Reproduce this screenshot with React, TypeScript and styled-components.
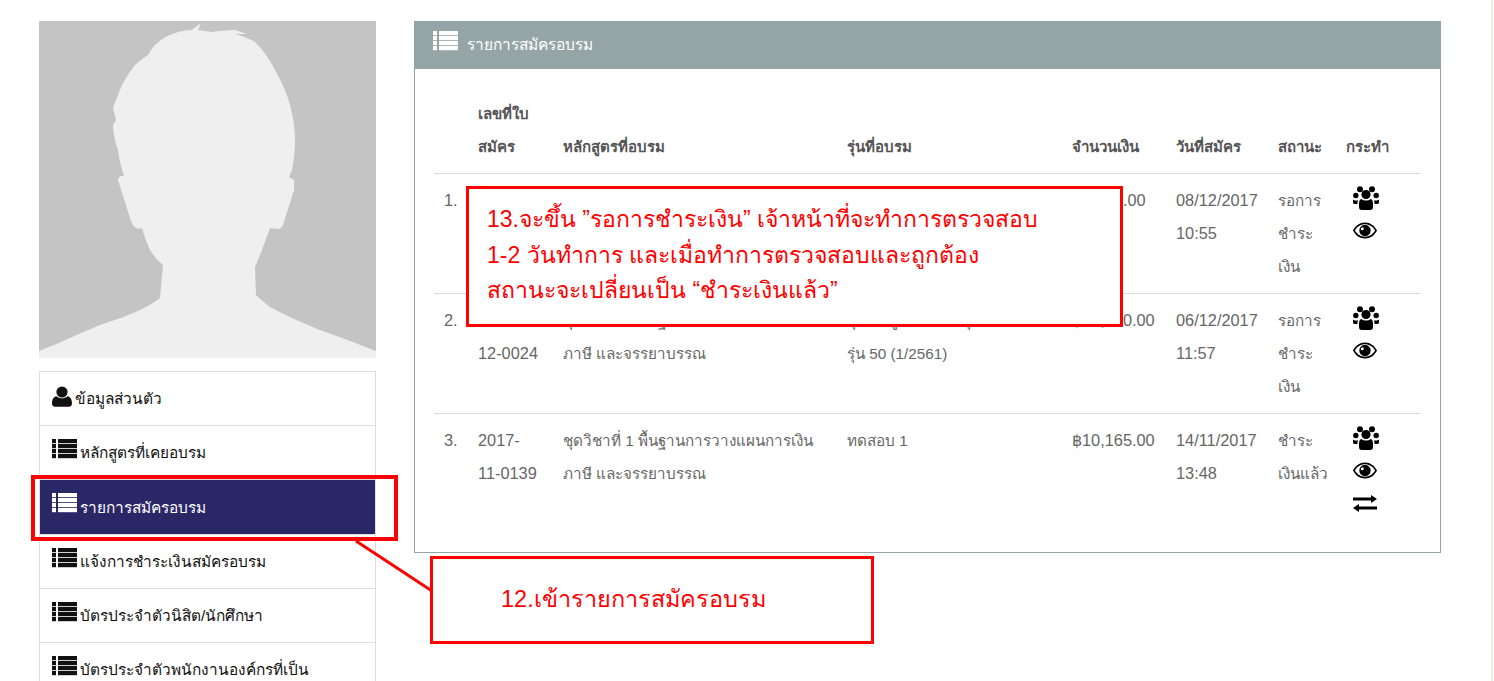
import React from "react";
import styled, { createGlobalStyle } from "styled-components";

const Global = createGlobalStyle`
  html, body { margin: 0; padding: 0; background: #fff; }
  body { font-family: "Liberation Sans", "Noto Sans", sans-serif; overflow: hidden; }
`;

const Page = styled.div`
  position: relative;
  width: 1493px;
  height: 681px;
  overflow: hidden;
  box-sizing: border-box;
  padding: 21px 0 0 39px;
  display: flex;
  gap: 38px;
  border-right: 2px solid #ecece4;
`;
const Side = styled.aside`
  flex: 0 0 337px;
  display: flex;
  flex-direction: column;
  gap: 13px;
`;
const Avatar = styled.svg`
  display: block;
  flex: none;
  width: 337px;
  height: 337px;
`;
const Menu = styled.ul`
  flex: none;
  list-style: none;
  margin: 0;
  padding: 0;
  border: 1px solid #ddd;
  border-bottom: 0;
`;
const MenuItem = styled.li<{ $active?: boolean }>`
  height: ${(p) => (p.$active ? 55 : 54)}px;
  box-sizing: border-box;
  padding: 10px 12px;
  border-bottom: 1px solid #ddd;
  font-size: 15.4px;
  line-height: 33px;
  white-space: nowrap;
  color: ${(p) => (p.$active ? "#fff" : "#111")};
  background: ${(p) => (p.$active ? "#2a2766" : "#fff")};
  display: flex;
  align-items: center;
  gap: 3px;
`;
const Panel = styled.section`
  flex: 0 0 1027px;
  height: 532px;
  box-sizing: border-box;
  border: 1px solid #95a5a6;
  border-top: 0;
`;
const PanelHead = styled.header`
  height: 48px;
  margin: 0 -1px;
  padding: 0 19px;
  background: #95a5a6;
  color: #fff;
  display: flex;
  align-items: center;
  gap: 9px;
  font-size: 15.5px;
  line-height: 46px;
`;
const PanelBody = styled.div`
  padding: 18px 19px 0;
`;
const Table = styled.table`
  width: 987px;
  table-layout: fixed;
  border-collapse: collapse;
  font-size: 15.25px;
  line-height: 33px;
  color: #666;
`;
const Th = styled.th<{ $w: number }>`
  width: ${(p) => p.$w}px;
  box-sizing: border-box;
  padding: 10px;
  text-align: left;
  vertical-align: bottom;
  font-weight: 700;
  font-size: 15px;
  color: #555;
`;
const Row = styled.tr`
  border-top: 1px solid #ddd;
`;
const Td = styled.td<{ $latin?: boolean }>`
  padding: 10px;
  vertical-align: top;
  white-space: nowrap;
  font-size: ${(p) => (p.$latin ? "16.35px" : "inherit")};
`;
const Actions = styled.div`
  display: flex;
  flex-direction: column;
  align-items: flex-start;
  color: #000;
  margin: -3px 0 0 7px;
`;
const ActionIcon = styled.span`
  height: 33px;
  display: flex;
  align-items: center;
`;
const Outline = styled.div`
  position: absolute;
  box-sizing: border-box;
  border: 3px solid #f00;
  color: #f00;
`;
const NoteBig = styled(Outline)`
  left: 466px;
  top: 186px;
  width: 657px;
  height: 141px;
  background: #fff;
  padding: 13px 18px;
  font-size: 23px;
  line-height: 35.5px;
  white-space: nowrap;
`;
const NoteSmall = styled(Outline)`
  left: 430px;
  top: 556px;
  width: 444px;
  height: 88px;
  background: #fff;
  padding: 0 68px;
  font-size: 23.5px;
  line-height: 80px;
  white-space: nowrap;
`;
const Highlight = styled(Outline)`
  left: 31px;
  top: 475px;
  width: 367px;
  height: 66px;
  border-width: 4px;
`;
const Connector = styled.svg`
  position: absolute;
  left: 350px;
  top: 535px;
  width: 90px;
  height: 65px;
`;
const IconSvg = styled.svg<{ $lift: number }>`
  flex: none;
  margin-top: ${(p) => -p.$lift}px;
`;

const ListIcon = () => (
  <IconSvg $lift={8} width="25" height="20" viewBox="0 0 25 20" fill="currentColor">
    {[0, 5, 10, 15].map((y) => (
      <g key={y}>
        <rect x="0" y={y} width="4" height="4.200" />
        <rect x="6" y={y} width="19" height="4.200" />
      </g>
    ))}
  </IconSvg>
);
const UserIcon = () => (
  <IconSvg $lift={4} width="20" height="21" viewBox="0 0 20 21" fill="currentColor">
    <circle cx="10" cy="6" r="5.600" />
    <path d="M0 17.500C0 13.500 1.500 10.500 4.600 10.200 6 11.600 8 12.200 10 12.200s4-.6 5.400-2c3.100.3 4.600 3.300 4.600 7.300 0 2-1.400 3.300-3.200 3.300H3.200C1.400 20.800 0 19.500 0 17.500z" />
  </IconSvg>
);
const UsersIcon = () => (
  <svg width="26" height="24" viewBox="0 0 26 24" fill="currentColor">
    <circle cx="7" cy="3.200" r="3" />
    <circle cx="19" cy="3.200" r="3" />
    <circle cx="13" cy="8.500" r="4.600" />
    <circle cx="2.800" cy="9.500" r="2.700" />
    <circle cx="23.200" cy="9.500" r="2.700" />
    <path d="M0 13.500c1 1 3 1.200 5 .7-.5 1.300-.6 2.500-.6 3.800H1.500C.5 18 0 17.300 0 16z" />
    <path d="M26 13.500c-1 1-3 1.200-5 .7.500 1.300.6 2.500.6 3.800h2.900c1 0 1.500-.7 1.500-2z" />
    <path d="M6 17.500c0-2.500.8-4.200 2.400-4.600 1.200 1 3 1.500 4.600 1.500s3.400-.5 4.600-1.500c1.600.4 2.400 2.100 2.400 4.600V21c0 1.800-1 3-2.500 3h-9C7 24 6 22.800 6 21z" />
  </svg>
);
const EyeIcon = () => (
  <svg width="24" height="17" viewBox="0 0 24 17" fill="currentColor" fillRule="evenodd">
    <path d="M12 .5C6.800.5 2.500 3.500 0 8.500c2.500 5 6.800 8 12 8s9.500-3 12-8c-2.500-5-6.800-8-12-8zM12 2.300c-4.300 0-7.900 2.300-10 6.200 2.100 3.900 5.700 6.200 10 6.200s7.900-2.300 10-6.200c-2.100-3.900-5.700-6.200-10-6.200z" />
    <path d="M12 2.800a5.700 5.700 0 1 0 0 11.400 5.700 5.700 0 0 0 0-11.400zM9.300 5.300a1.500 1.500 0 1 1 0 3 1.500 1.500 0 0 1 0-3z" />
  </svg>
);
const TransferIcon = () => (
  <svg width="24" height="17" viewBox="0 0 24 17" fill="currentColor">
    <path d="M0 2.500h18V0l6 4-6 4V5.500H0z" />
    <path d="M24 11.500H6V9l-6 4 6 4v-2.500h18z" />
  </svg>
);

const columns: [string[], number][] = [
  [[], 34],
  [["เลขที่ใบ", "สมัคร"], 85],
  [["หลักสูตรที่อบรม"], 284],
  [["รุ่นที่อบรม"], 225],
  [["จำนวนเงิน"], 104],
  [["วันที่สมัคร"], 102],
  [["สถานะ"], 68],
  [["กระทำ"], 85],
];
const course = ["ชุดวิชาที่ 1 พื้นฐานการวางแผนการเงิน", "ภาษี และจรรยาบรรณ"];
const rows = [
  { n: "1.", code: ["2017-", "12-0031"], course, gen: ["จุฬาฯ ศูนย์อบรมกรุงเทพ", "รุ่น 50 (1/2561)"], amt: "฿9,630.00", date: ["08/12/2017", "10:55"], status: ["รอการ", "ชำระ", "เงิน"], transfer: false },
  { n: "2.", code: ["2017-", "12-0024"], course, gen: ["จุฬาฯ ศูนย์อบรมกรุงเทพ", "รุ่น 50 (1/2561)"], amt: "฿10,700.00", date: ["06/12/2017", "11:57"], status: ["รอการ", "ชำระ", "เงิน"], transfer: false },
  { n: "3.", code: ["2017-", "11-0139"], course, gen: ["ทดสอบ 1"], amt: "฿10,165.00", date: ["14/11/2017", "13:48"], status: ["ชำระ", "เงินแล้ว"], transfer: true },
];
const menu = ["หลักสูตรที่เคยอบรม", "รายการสมัครอบรม", "แจ้งการชำระเงินสมัครอบรม", "บัตรประจำตัวนิสิต/นักศึกษา", "บัตรประจำตัวพนักงานองค์กรที่เป็น"];

const Lines = ({ items }: { items: string[] }) => (
  <>
    {items.map((t, i) => (
      <React.Fragment key={t}>
        {i > 0 && <br />}
        {t}
      </React.Fragment>
    ))}
  </>
);

export default function App() {
  return (
    <>
      <Global />
      <Page>
        <Side>
          <Avatar viewBox="39 21 337 337">
            <rect x="39" y="21" width="337" height="337" fill="#c4c4c4" />
            <path
              fill="#efefef"
              d="M39 351C60 343 80 333 100 325 118 319 130 315 140 310 148 306 155 302 160 298L163 265C157 260 153 255 150 250 147 243 144 236 142 228 139 229 137 229 136 228 133 226 131 222 130 218L118 180C118 178 120 176 122 176L124 176C121 167 119 158 118 150 115 142 113 133 113 125L116 120 113 108C116 100 119 92 122 85 127 76 131 70 135 65 139 61 144 58 148 55 150 51 152 48 155 45 161 39 168 35 175 33 181 31 187 30 192 30L201 23 198 30 212 32C220 31 228 30 235 30L247 34 235 34C243 36 250 39 255 42 263 50 270 60 275 70 282 82 287 94 290 105 293 117 295 128 295 140 295 150 294 160 292 170L289 177 294 180 294 190 283 225C282 227 280 229 278 229L270 228 262 250 255 267 256 295C260 299 265 303 270 307 285 315 302 323 320 330 340 337 358 344 376 351L376 358 39 358Z"
            />
          </Avatar>
          <Menu>
            <MenuItem>
              <UserIcon />
              ข้อมูลส่วนตัว
            </MenuItem>
            {menu.map((m, i) => (
              <MenuItem key={m} $active={i === 1}>
                <ListIcon />
                {m}
              </MenuItem>
            ))}
          </Menu>
        </Side>
        <Panel>
          <PanelHead>
            <ListIcon />
            รายการสมัครอบรม
          </PanelHead>
          <PanelBody>
            <Table>
              <thead>
                <tr>
                  {columns.map(([label, w]) => (
                    <Th key={w} $w={w}>
                      <Lines items={label} />
                    </Th>
                  ))}
                </tr>
              </thead>
              <tbody>
                {rows.map((r) => (
                  <Row key={r.n}>
                    <Td $latin>{r.n}</Td>
                    <Td $latin>
                      <Lines items={r.code} />
                    </Td>
                    <Td>
                      <Lines items={r.course} />
                    </Td>
                    <Td>
                      <Lines items={r.gen} />
                    </Td>
                    <Td $latin>{r.amt}</Td>
                    <Td $latin>
                      <Lines items={r.date} />
                    </Td>
                    <Td>
                      <Lines items={r.status} />
                    </Td>
                    <Td>
                      <Actions>
                        <ActionIcon>
                          <UsersIcon />
                        </ActionIcon>
                        <ActionIcon>
                          <EyeIcon />
                        </ActionIcon>
                        {r.transfer && (
                          <ActionIcon>
                            <TransferIcon />
                          </ActionIcon>
                        )}
                      </Actions>
                    </Td>
                  </Row>
                ))}
              </tbody>
            </Table>
          </PanelBody>
        </Panel>
        <NoteBig>
          13.จะขึ้น ”รอการชำระเงิน” เจ้าหน้าที่จะทำการตรวจสอบ
          <br />
          1-2 วันทำการ และเมื่อทำการตรวจสอบและถูกต้อง
          <br />
          สถานะจะเปลี่ยนเป็น “ชำระเงินแล้ว”
        </NoteBig>
        <Highlight />
        <Connector viewBox="350 535 90 65">
          <line x1="356" y1="541" x2="432" y2="591" stroke="#f00" strokeWidth="3" />
        </Connector>
        <NoteSmall>12.เข้ารายการสมัครอบรม</NoteSmall>
      </Page>
    </>
  );
}
